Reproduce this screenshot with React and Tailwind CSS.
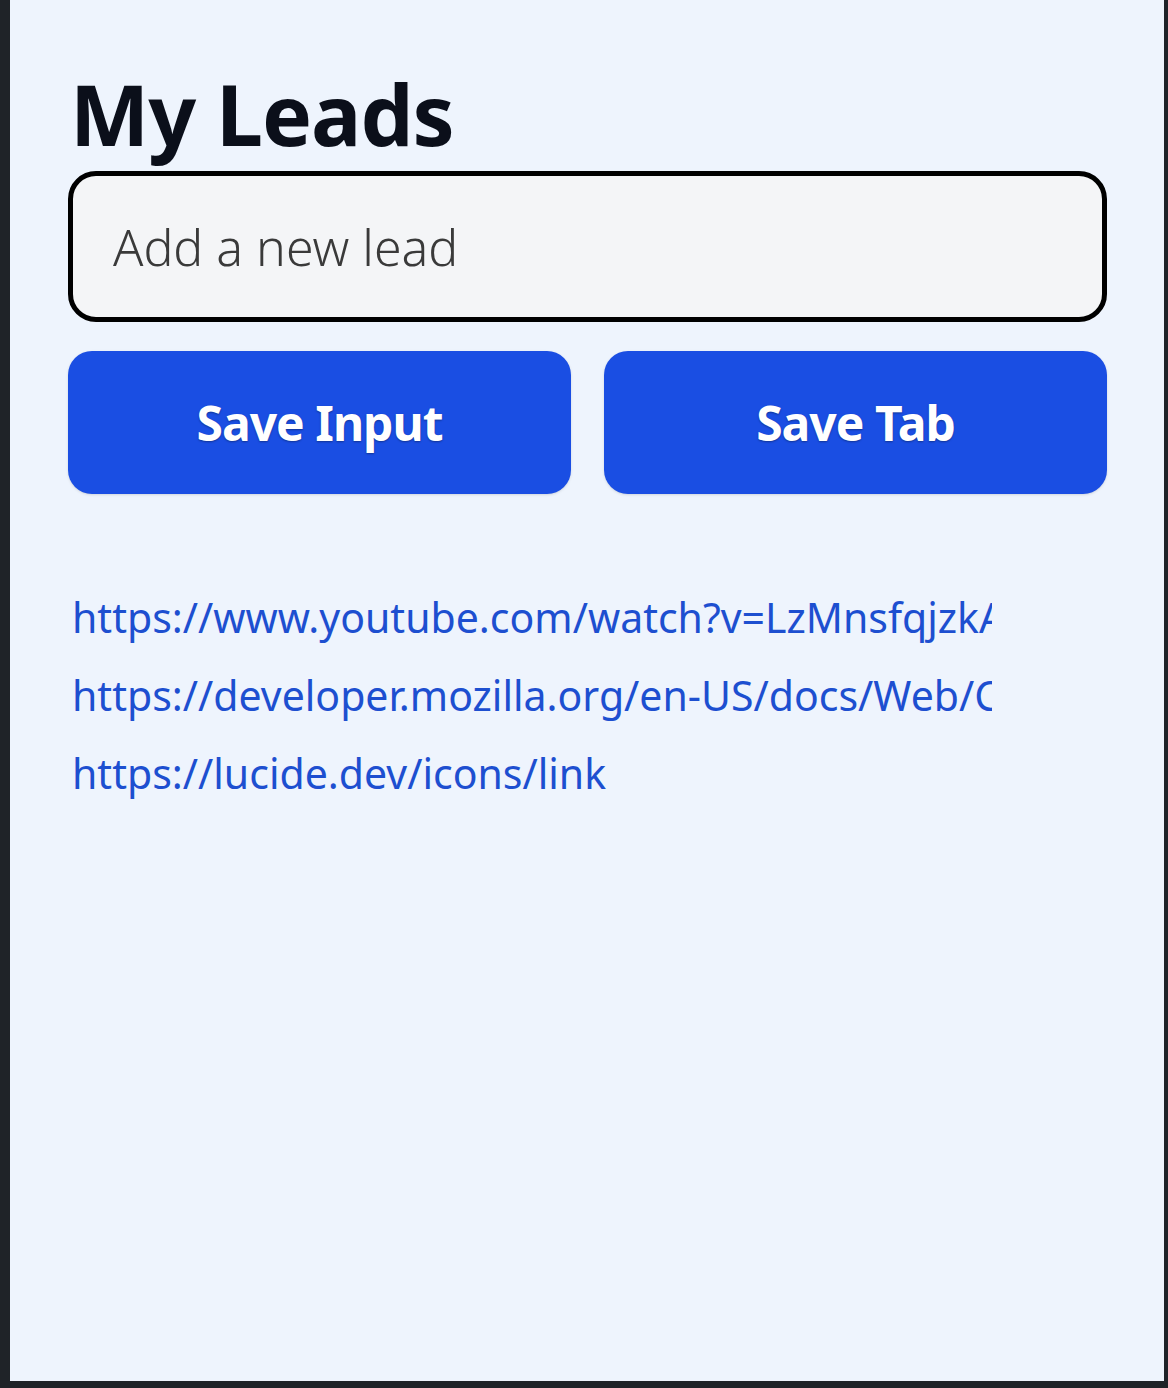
export default function App() {
  const leads = [
    'https://www.youtube.com/watch?v=LzMnsfqjzkA',
    'https://developer.mozilla.org/en-US/docs/Web/CSS',
    'https://lucide.dev/icons/link',
  ]

  return (
    <div className="w-[1168px] h-[1388px] bg-[#1f2328] pl-[10px] pr-[4px] pb-[7px] flex" style={{ fontFamily: '"Noto Sans", "Open Sans", sans-serif' }}>
      <div className="flex-1 bg-[#eef4fd] pl-[58px] pr-[57px] pt-[72px]">
        <h1 className="text-[84px] leading-none font-bold text-[#0b0f1a] ml-[2px] tracking-[-1px]">My Leads</h1>
        <input
          placeholder="Add a new lead"
          className="mt-[15px] w-full h-[151px] rounded-[28px] border-[5px] border-black bg-[#f4f5f7] px-[40px] text-[50px] font-light text-gray-800 placeholder:text-[#3a3a3a] outline-none"
        />
        <div className="mt-[29px] grid grid-cols-2 gap-[33px]">
          <button className="h-[143px] rounded-[24px] bg-[#1a4ee3] text-white text-[48px] font-bold tracking-[-1px] shadow-sm [text-shadow:0_1px_2px_rgba(0,0,0,0.35)]">Save Input</button>
          <button className="h-[143px] rounded-[24px] bg-[#1a4ee3] text-white text-[48px] font-bold tracking-[-1px] shadow-sm [text-shadow:0_1px_2px_rgba(0,0,0,0.35)]">Save Tab</button>
        </div>
        <ul className="mt-[84px] w-[920px] ml-[4px] overflow-hidden">
          {leads.map(l => (
            <li key={l} className="whitespace-nowrap h-[78px] text-[41px] leading-[78px] text-[#1d4fd0]">
              <a href={l}>{l}</a>
            </li>
          ))}
        </ul>
      </div>
    </div>
  )
}
